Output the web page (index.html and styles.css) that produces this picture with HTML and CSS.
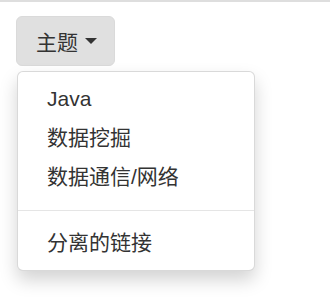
FILE: index.html
```html
<!DOCTYPE html>
<html lang="zh-CN">
<head>
<meta charset="utf-8">
<title>Dropdown</title>
<link rel="stylesheet" href="styles.css">
</head>
<body>
<div class="page">
  <div class="dropdown">
    <button class="btn" type="button">主题<span class="caret"></span></button>
    <ul class="menu">
      <li><a href="#">Java</a></li>
      <li><a href="#">数据挖掘</a></li>
      <li><a href="#">数据通信/网络</a></li>
      <li class="divider"></li>
      <li><a href="#">分离的链接</a></li>
    </ul>
  </div>
</div>
</body>
</html>
```

FILE: styles.css
```css
html, body {
  margin: 0;
  padding: 0;
  background: #fff;
}
body {
  font-family: "Liberation Sans", "Noto Sans CJK SC", sans-serif;
  color: #333;
}
.page {
  border-top: 2px solid #dedede;
  padding: 14px 0 0 16px;
  min-height: 100vh;
  box-sizing: border-box;
}
.dropdown {
  position: relative;
  display: inline-block;
}
.btn {
  display: flex;
  align-items: center;
  height: 50px;
  padding: 0 17px 0 19px;
  margin: 0;
  font-family: inherit;
  font-size: 21px;
  color: #333;
  background: #e0e0e0;
  border: 1px solid #dadada;
  border-radius: 6px;
  box-sizing: border-box;
}
.caret {
  display: inline-block;
  width: 0;
  height: 0;
  margin-left: 7px;
  border-top: 6px solid #333;
  border-left: 6px solid transparent;
  border-right: 6px solid transparent;
}
.menu {
  position: absolute;
  top: calc(100% + 5px);
  left: 1px;
  width: 238px;
  box-sizing: border-box;
  margin: 0;
  padding: 7.5px 0;
  list-style: none;
  background: #fff;
  border: 1px solid rgba(0, 0, 0, 0.15);
  border-radius: 6px;
  box-shadow: 0 9px 18px rgba(0, 0, 0, 0.175);
}
.menu a {
  display: block;
  padding: 4.5px 29px;
  font-size: 21px;
  line-height: 30px;
  color: #333;
  text-decoration: none;
  white-space: nowrap;
}
.divider {
  height: 1px;
  margin: 13px 0;
  background: #e5e5e5;
}
```
